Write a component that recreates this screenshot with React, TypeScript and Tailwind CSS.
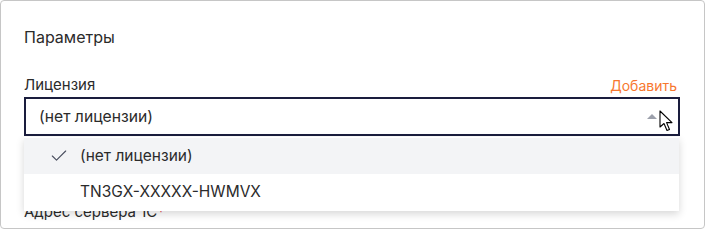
import React from 'react';
import { Check } from 'lucide-react';

const options = ['(нет лицензии)', 'TN3GX-XXXXX-HWMVX'];

const Cursor: React.FC = () => (
  <svg width="14" height="22" viewBox="0 0 14 22" className="absolute left-[658px] top-[109px]">
    <path
      d="M1 1 L1 17 L5 13.5 L8 20.5 L10.5 19.5 L7.6 12.6 L13 12.6 Z"
      fill="#fff"
      stroke="#000"
      strokeWidth="1.1"
      strokeLinejoin="round"
    />
  </svg>
);

export default function App() {
  const selected = options[0];

  return (
    <div className="w-[706px] h-[230px] bg-white font-['Inter','Noto_Sans',sans-serif]">
      <div className="relative w-[705px] h-[229px] border border-[#c6c6c6] rounded-[4px] overflow-hidden pl-[23px] pr-[24px] pt-[26px]">
        <h2 className="text-[16px] leading-[20px] text-[#2b2b2b]">Параметры</h2>

        {/* License field */}
        <div className="mt-[28px] flex items-center justify-between h-[20px]">
          <span className="text-[15px] text-[#2b2b2b]">Лицензия</span>
          <span className="text-[14px] text-[#f7772f] pr-[3px]">Добавить</span>
        </div>
        <div className="relative mt-[2px]">
          <div className="h-[39px] border-2 border-[#1a1d3d] flex items-center pl-[13px] pr-[20px]">
            <span className="flex-1 text-[15.7px] text-[#2b2b2b]">{selected}</span>
            <span className="w-0 h-0 border-x-[5px] border-x-transparent border-b-[5px] border-b-[#9ca0ab] mr-[1px]" />
          </div>

          {/* Dropdown menu */}
          <div className="absolute left-0 right-[1px] top-[40px] z-10 bg-white shadow-[0_3px_8px_rgba(0,0,0,0.16)] py-[1px]">
            {options.map((opt) => (
              <div
                key={opt}
                className={`h-[36px] flex items-center ${opt === selected ? 'bg-[#f3f4f6]' : 'bg-white'}`}
              >
                <span className="w-[56px] flex justify-end pr-[11px]">
                  {opt === selected && <Check size={20} strokeWidth={1.4} className="text-[#4b5060]" />}
                </span>
                <span className="text-[15.5px] text-[#2b2b2b]">{opt}</span>
              </div>
            ))}
          </div>
        </div>

        {/* Server address */}
        <div className="mt-[66px] text-[15px] leading-[20px] text-[#2b2b2b]">
          Адрес сервера 1С<span className="text-[#e5484d]">*</span>
        </div>

        <Cursor />
      </div>
    </div>
  );
}
